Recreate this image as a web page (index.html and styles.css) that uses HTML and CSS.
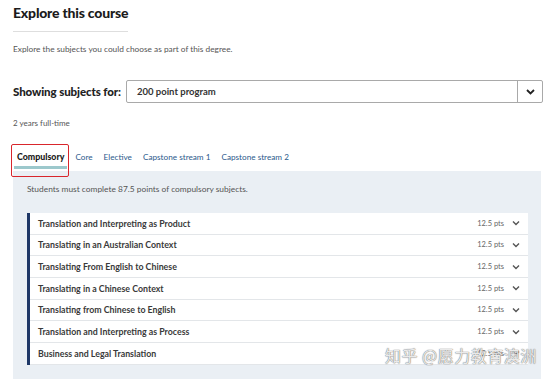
FILE: index.html
```html
<!DOCTYPE html>
<html>
<head>
<meta charset="utf-8">
<link rel="stylesheet" href="styles.css">
</head>
<body>
<div class="page">
  <h1 class="title">Explore this course</h1>
  <div class="rule"></div>
  <p class="desc">Explore the subjects you could choose as part of this degree.</p>
  <div class="select-row">
    <span class="select-label">Showing subjects for:</span>
    <div class="select">
      <span class="select-value">200 point program</span>
      <span class="select-btn"><svg width="9" height="6" viewBox="0 0 9 6"><path d="M1 1l3.5 3.5L8 1" fill="none" stroke="#222" stroke-width="1.8"/></svg></span>
    </div>
  </div>
  <p class="years">2 years full-time</p>
  <div class="tabs">
    <span class="tab active">Compulsory</span>
    <span class="tab">Core</span>
    <span class="tab">Elective</span>
    <span class="tab">Capstone stream 1</span>
    <span class="tab">Capstone stream 2</span>
  </div>
  <div class="panel">
    <p class="panel-note">Students must complete 87.5 points of compulsory subjects.</p>
    <ul class="list">
      <li class="row"><span class="name">Translation and Interpreting as Product</span><span class="pts">12.5 pts</span><svg class="chev" width="8" height="6" viewBox="0 0 8 6"><path d="M1 1.5l3 3 3-3" fill="none" stroke="#555" stroke-width="1.4"/></svg></li>
      <li class="row"><span class="name">Translating in an Australian Context</span><span class="pts">12.5 pts</span><svg class="chev" width="8" height="6" viewBox="0 0 8 6"><path d="M1 1.5l3 3 3-3" fill="none" stroke="#555" stroke-width="1.4"/></svg></li>
      <li class="row"><span class="name">Translating From English to Chinese</span><span class="pts">12.5 pts</span><svg class="chev" width="8" height="6" viewBox="0 0 8 6"><path d="M1 1.5l3 3 3-3" fill="none" stroke="#555" stroke-width="1.4"/></svg></li>
      <li class="row"><span class="name">Translating in a Chinese Context</span><span class="pts">12.5 pts</span><svg class="chev" width="8" height="6" viewBox="0 0 8 6"><path d="M1 1.5l3 3 3-3" fill="none" stroke="#555" stroke-width="1.4"/></svg></li>
      <li class="row"><span class="name">Translating from Chinese to English</span><span class="pts">12.5 pts</span><svg class="chev" width="8" height="6" viewBox="0 0 8 6"><path d="M1 1.5l3 3 3-3" fill="none" stroke="#555" stroke-width="1.4"/></svg></li>
      <li class="row"><span class="name">Translation and Interpreting as Process</span><span class="pts">12.5 pts</span><svg class="chev" width="8" height="6" viewBox="0 0 8 6"><path d="M1 1.5l3 3 3-3" fill="none" stroke="#555" stroke-width="1.4"/></svg></li>
      <li class="row"><span class="name">Business and Legal Translation</span><span class="pts">12.5 pts</span><svg class="chev" width="8" height="6" viewBox="0 0 8 6"><path d="M1 1.5l3 3 3-3" fill="none" stroke="#555" stroke-width="1.4"/></svg></li>
    </ul>
  </div>
  <div class="watermark">知乎 @愿力教育澳洲</div>
</div>
</body>
</html>
```
FILE: styles.css
```css
* { box-sizing: border-box; }
html, body { margin: 0; padding: 0; background: #fff; }
body { font-family: Lato, "Liberation Sans", sans-serif; color: #222; }
.page { position: relative; width: 554px; height: 387px; padding: 0 11px 0 13px; overflow: hidden; }
.title { margin: 0; padding-top: 4px; font-size: 14px; line-height: 18px; font-weight: 900; color: #1b1b1b; letter-spacing: -0.2px; }
.rule { width: 115px; height: 1px; background: #dedede; margin-top: 9px; }
.desc { margin: 11px 0 0; font-size: 8.3px; line-height: 12px; color: #555; }
.select-row { display: flex; align-items: center; margin-top: 25px; height: 23px; }
.select-label { font-size: 11.5px; font-weight: 900; color: #222; width: 113px; letter-spacing: -0.1px; }
.select-value { flex: 1; display: flex; align-items: center; padding-left: 10px; font-size: 9.5px; font-weight: 700; color: #333; }
.select { flex: 1; display: flex; align-items: stretch; height: 23px; border: 1px solid #a9a9a9; border-radius: 2px; }
.select-btn { width: 25px; display: flex; align-items: center; justify-content: center; border-left: 1px solid #a9a9a9; }
.years { margin: 14px 0 0; font-size: 8px; line-height: 12px; color: #555; }
.tabs { display: flex; gap: 5px; margin-top: 15px; height: 27px; padding-left: 1px; position: relative; }
.tab { padding: 7px 3px 0; font-size: 8.2px; line-height: 12px; color: #2b5a8c; position: relative; }
.tab.active { font-size: 8.8px; font-weight: 900; color: #1b1b1b; border-bottom: 3px solid #9cc8cc; height: 25px; }
.tab.active::after { content: ""; position: absolute; left: -3px; right: -2px; top: 0; height: 31px; border: 1.5px solid #d9262c; border-radius: 2px; }
.panel { background: #eaeff4; padding: 12px 13px 14px 14px; margin-right: 2px; }
.panel-note { margin: 0; font-size: 8.4px; line-height: 12px; color: #555; }
.list { list-style: none; margin: 18px 0 0; padding: 0; border-left: 3px solid #1e3766; background: #fff; }
.row { display: flex; align-items: center; height: 21.67px; padding: 0 8px 0 8px; border-bottom: 1px solid #e3e6e9; }
.name { flex: 1; font-size: 8.8px; font-weight: 700; color: #3a3a3a; }
.pts { font-size: 7.5px; color: #666; margin-right: 8px; }
.chev { display: block; }
.watermark { position: absolute; left: 385px; top: 344px; font-family: "Noto Sans CJK SC", sans-serif; font-size: 16px; line-height: 22px; color: rgba(255,255,255,0.85); text-shadow: 0 0 1px #777, 0 0 1px #777; letter-spacing: 0.5px; }
```
